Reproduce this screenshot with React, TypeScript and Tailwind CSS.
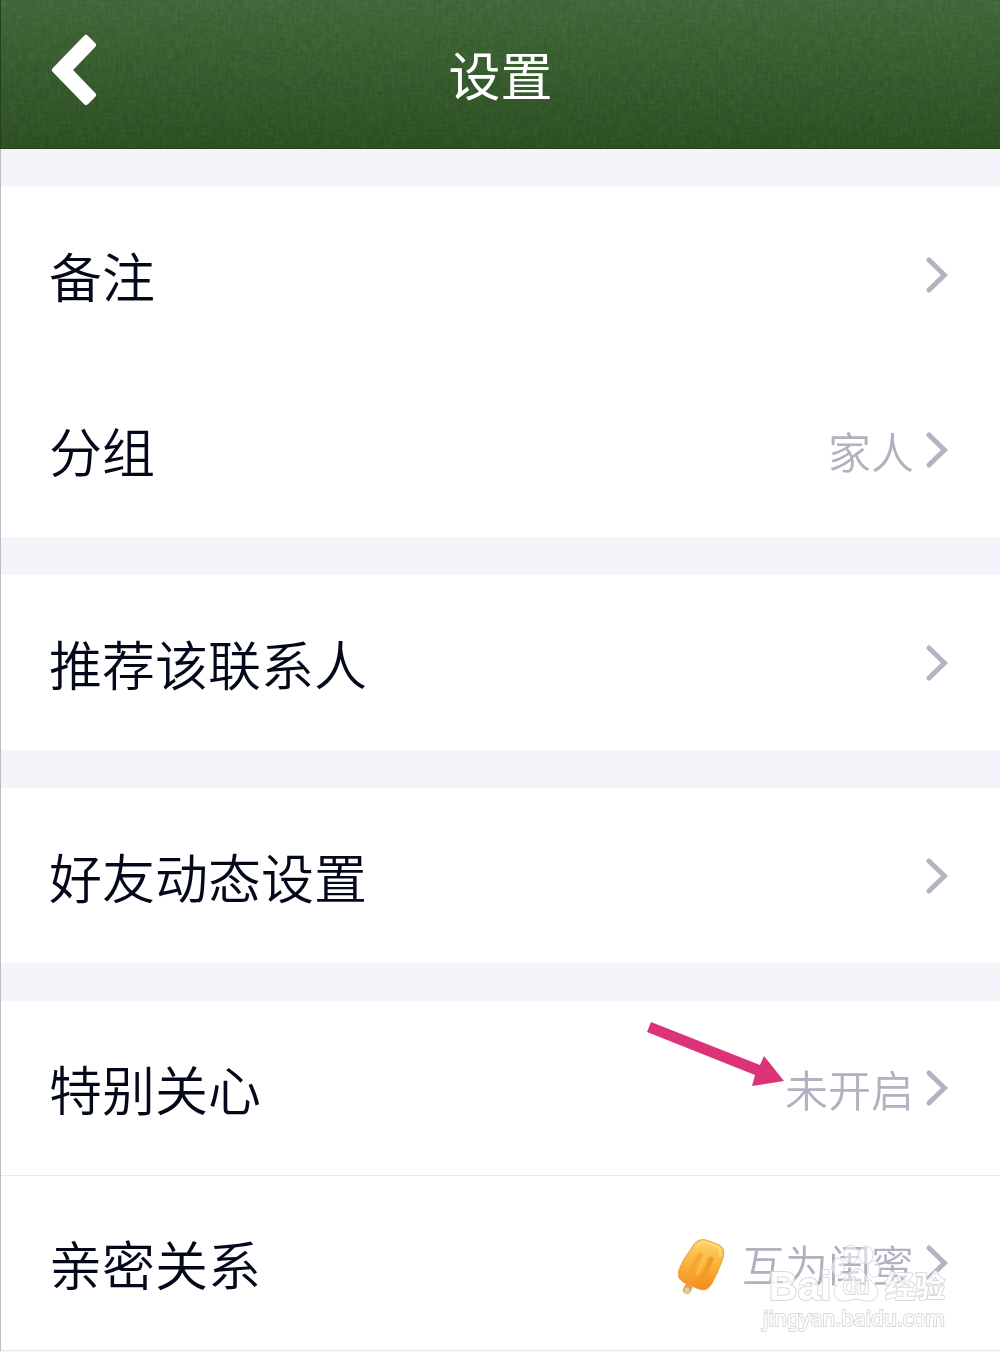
import type { ReactNode } from "react"

type Row = {
  label: string
  value?: string
  icon?: ReactNode
  overlay?: ReactNode
  divider?: boolean
}

function BackIcon() {
  return (
    <svg width="46" height="72" viewBox="0 0 46 72" fill="none" aria-hidden="true">
      <path
        d="M4 36L35 4L42 11L18 36L42 61L35 68Z"
        fill="#fff"
        stroke="#fff"
        strokeWidth="6"
        strokeLinejoin="round"
      />
    </svg>
  )
}

function ChevronIcon() {
  return (
    <svg width="22" height="36" viewBox="0 0 22 36" fill="none" className="shrink-0" aria-hidden="true">
      <path d="M3 3L18.500 18L3 33" stroke="#b2b4c2" strokeWidth="5" strokeLinecap="round" />
    </svg>
  )
}

function PopsicleIcon() {
  return (
    <svg width="48" height="58" viewBox="0 0 48 58" className="mt-2 mr-4 shrink-0" aria-hidden="true">
      <defs>
        <linearGradient id="ice" x1="0" y1="0" x2="0" y2="1">
          <stop offset="0" stopColor="#fbd467" />
          <stop offset="0.5" stopColor="#fbb23a" />
          <stop offset="1" stopColor="#f58a1c" />
        </linearGradient>
      </defs>
      <path d="M12 46L9 52" stroke="#dca65c" strokeWidth="8" strokeLinecap="round" />
      <path d="M9 52L9 53" stroke="#edc88f" strokeWidth="5" strokeLinecap="round" />
      <path
        d="M15 8C18 2 23 1 28 2L39 6C45 8 47 13 45 20C42 29 38 38 34 45C31 51 27 53 21 51L7 45C1 42 -1 38 1 32C4 23 10 15 15 8Z"
        fill="url(#ice)"
        stroke="#e9a044"
        strokeWidth="1"
      />
      <path d="M19 9C22 4 26 4 30 5L38 8C42 10 43 14 42 18" stroke="#fddc80" strokeWidth="2" fill="none" strokeLinecap="round" />
      <path d="M22 17L13 33" stroke="#f5a635" strokeWidth="5" strokeLinecap="round" />
      <path d="M33 21L25 40" stroke="#f2992c" strokeWidth="5" strokeLinecap="round" />
      <path d="M28 17L19 36" stroke="#fdc453" strokeWidth="2" strokeLinecap="round" />
    </svg>
  )
}

function Arrow() {
  return (
    <svg
      width="138"
      height="66"
      viewBox="0 0 138 66"
      className="absolute top-5 right-[216px]"
      aria-hidden="true"
    >
      <path d="M5 1L114 44L118 35L138 60L106 65L109 54L1 11Z" fill="#dc3378" />
    </svg>
  )
}

function Watermark() {
  return (
    <div className="pointer-events-none absolute top-[68px] right-[55px] flex flex-col items-end text-white opacity-85 [-webkit-text-stroke:2px_#d4d4d6] [paint-order:stroke]">
      <div className="flex h-[60px] items-end">
        <span className="font-['Liberation_Sans',sans-serif] text-[40px] leading-9 font-bold">Bai</span>
        <span className="relative flex h-[60px] w-[50px] items-end justify-center">
          <svg
            width="50"
            height="60"
            viewBox="0 0 50 60"
            className="absolute inset-0"
            fill="#fff"
            fillOpacity="0.6"
            stroke="#c0c0c4"
            aria-hidden="true"
          >
            <ellipse cx="7" cy="23" rx="6" ry="9" />
            <ellipse cx="20" cy="10" rx="7" ry="9" />
            <ellipse cx="35" cy="11" rx="7" ry="9" />
            <ellipse cx="43" cy="25" rx="6" ry="8" />
            <path d="M26 25C33 25 35 33 41 38C49 44 49 56 39 57C33 58 30 55 25 55C20 55 17 58 11 57C1 56 1 44 9 38C15 33 19 25 26 25Z" />
          </svg>
          <span className="relative font-['Liberation_Sans',sans-serif] text-2xl leading-9">du</span>
        </span>
        <span className="ml-1 font-['Noto_Sans_CJK_SC',sans-serif] text-3xl leading-10 font-bold">经验</span>
      </div>
      <span className="font-['Noto_Sans',sans-serif] text-[21px] leading-7 font-normal">jingyan.baidu.com</span>
    </div>
  )
}

const groups: Row[][] = [
  [{ label: "备注" }, { label: "分组", value: "家人" }],
  [{ label: "推荐该联系人" }],
  [{ label: "好友动态设置" }],
  [
    { label: "特别关心", value: "未开启", overlay: <Arrow />, divider: true },
    { label: "亲密关系", value: "互为闺蜜", icon: <PopsicleIcon />, overlay: <Watermark />, divider: true },
  ],
]

function SettingRow({ label, value, icon, overlay, divider }: Row) {
  return (
    <li className={`relative ${divider ? "border-b border-[#e9eaee]" : ""}`}>
      <button
        className={`flex w-full items-center pr-[52px] pl-12 text-left ${divider ? "h-[174px]" : "h-[175px]"}`}
      >
        <span className="flex-1 text-[53px] leading-[76px] text-[#03081a]">{label}</span>
        {icon}
        {value && <span className="mr-3 text-[43px] leading-16 text-[#b0b2c0]">{value}</span>}
        <ChevronIcon />
      </button>
      {overlay}
    </li>
  )
}

export default function App() {
  return (
    <div className="min-h-screen bg-[#f4f5fa] font-['Noto_Sans_CJK_SC',sans-serif] font-[350]">
      <header className="relative flex h-[149px] items-center justify-center overflow-hidden border-b border-l border-[#24401d] bg-linear-to-b from-[#41683a] to-[#2d5023]">
        {/* Woven cloth grain */}
        <svg className="absolute inset-0 h-full w-full opacity-25 mix-blend-soft-light" aria-hidden="true">
          <filter id="weaveX" colorInterpolationFilters="sRGB">
            <feTurbulence type="fractalNoise" baseFrequency="0.12 0.4" numOctaves="2" seed="3" />
            <feColorMatrix values="1 0 0 0 0  1 0 0 0 0  1 0 0 0 0  0 0 0 0 1" />
          </filter>
          <filter id="weaveY" colorInterpolationFilters="sRGB">
            <feTurbulence type="fractalNoise" baseFrequency="0.4 0.08" numOctaves="2" seed="8" />
            <feColorMatrix values="1 0 0 0 0  1 0 0 0 0  1 0 0 0 0  0 0 0 0 1" />
          </filter>
          <rect width="100%" height="100%" filter="url(#weaveX)" />
          <rect width="100%" height="100%" filter="url(#weaveY)" opacity="0.5" />
        </svg>
        <button aria-label="返回" className="absolute top-[34px] left-[50px]">
          <BackIcon />
        </button>
        <h1 className="relative text-[52px] leading-[76px] font-normal text-white">设置</h1>
      </header>

      <main className="flex flex-col gap-[38px] border-l border-[#bcbdc2] pt-[38px]">
        {groups.map((rows) => (
          <ul key={rows[0].label} className="bg-white">
            {rows.map((row) => (
              <SettingRow key={row.label} {...row} />
            ))}
          </ul>
        ))}
      </main>
    </div>
  )
}
